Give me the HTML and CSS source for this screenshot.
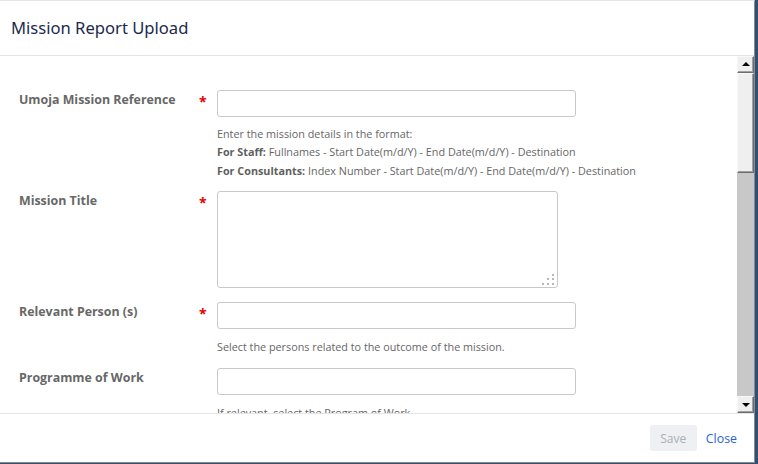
FILE: index.html
```html
<!DOCTYPE html>
<html>
<head>
<meta charset="utf-8">
<title>Mission Report Upload</title>
<link rel="stylesheet" href="styles.css">
</head>
<body>
<div class="modal">
  <div class="modal-header">
    <h4 class="modal-title">Mission Report Upload</h4>
  </div>
  <div class="modal-body">
    <div class="content">
      <form class="form">
        <div class="group group-first">
          <label class="label">Umoja Mission Reference</label>
          <span class="req">*</span>
          <div class="field">
            <input class="input" type="text">
            <div class="help">
              <div>Enter the mission details in the format:</div>
              <div><b>For Staff:</b> Fullnames - Start Date(m/d/Y) - End Date(m/d/Y) - Destination</div>
              <div><b>For Consultants:</b> Index Number - Start Date(m/d/Y) - End Date(m/d/Y) - Destination</div>
            </div>
          </div>
        </div>
        <div class="group group-area">
          <label class="label">Mission Title</label>
          <span class="req">*</span>
          <div class="field">
            <div class="textarea">
              <svg class="grip" width="14" height="13" viewBox="0 0 14 13">
                <rect x="10" y="1" width="2" height="2" fill="#b8b8b8"/>
                <rect x="5" y="5" width="2" height="2" fill="#b8b8b8"/>
                <rect x="10" y="5" width="2" height="2" fill="#b8b8b8"/>
                <rect x="0" y="10" width="2" height="2" fill="#b8b8b8"/>
                <rect x="5" y="10" width="2" height="2" fill="#b8b8b8"/>
                <rect x="10" y="10" width="2" height="2" fill="#b8b8b8"/>
              </svg>
            </div>
          </div>
        </div>
        <div class="group">
          <label class="label">Relevant Person (s)</label>
          <span class="req">*</span>
          <div class="field">
            <input class="input" type="text">
            <div class="help help-one">Select the persons related to the outcome of the mission.</div>
          </div>
        </div>
        <div class="group">
          <label class="label">Programme of Work</label>
          <span class="req"></span>
          <div class="field">
            <input class="input" type="text">
            <div class="help help-one">If relevant, select the Program of Work.</div>
          </div>
        </div>
      </form>
    </div>
    <div class="scrollbar">
      <div class="sb-btn"><span class="arrow-up"></span></div>
      <div class="sb-thumb"></div>
      <div class="sb-track"></div>
      <div class="sb-btn"><span class="arrow-down"></span></div>
    </div>
  </div>
  <div class="modal-footer">
    <button class="btn-save" type="button">Save</button>
    <a class="btn-close">Close</a>
  </div>
</div>
</body>
</html>
```

FILE: styles.css
```css
html, body {
  margin: 0;
  padding: 0;
}
body {
  width: 758px;
  height: 464px;
  background: #2d4f78;
  font-family: "Open Sans", "Noto Sans", "DejaVu Sans", sans-serif;
  overflow: hidden;
}
.modal {
  width: 754px;
  height: 461px;
  background: #fff;
  border-top: 1px solid #e6e6e6;
  border-right: 1px solid #8a8a8a;
  border-bottom: 1px solid #8a8a8a;
  display: flex;
  flex-direction: column;
}
.modal-header {
  height: 55px;
  border-bottom: 1px solid #e5e5e5;
  display: flex;
  align-items: center;
  padding-left: 11px;
  box-sizing: border-box;
  flex: none;
}
.modal-title {
  margin: 0;
  font-family: "Noto Sans", "Open Sans", sans-serif;
  font-weight: 400;
  font-size: 16.6px;
  color: #1b2a4c;
  padding-bottom: 1px;
}
.modal-body {
  height: 357px;
  flex: none;
  display: flex;
  border-bottom: 1px solid #e5e5e5;
}
.content {
  flex: 1;
  overflow: hidden;
  padding-top: 34px;
  box-sizing: border-box;
}
.form {
  margin: 0;
  padding-left: 19px;
}
.group {
  display: grid;
  grid-template-columns: 180px 18px 1fr;
  margin-bottom: 12px;
}
.group-first {
  margin-bottom: 11px;
}
.group-area {
  margin-bottom: 14px;
}
.label {
  font-size: 12.4px;
  font-weight: 700;
  color: #676767;
  line-height: 16px;
  padding-top: 2px;
}
.req {
  color: #e00000;
  font-weight: 700;
  font-size: 14px;
  line-height: 22px;
  padding-top: 1px;
}
.field {
  display: flex;
  flex-direction: column;
}
.input {
  width: 359px;
  height: 27px;
  box-sizing: border-box;
  border: 1px solid #c9c9c9;
  border-radius: 3px;
  margin: 0;
  padding: 0 6px;
  background: #fff;
}
.textarea {
  width: 341px;
  height: 97px;
  box-sizing: border-box;
  border: 1px solid #c9c9c9;
  border-radius: 3px;
  position: relative;
}
.grip {
  position: absolute;
  right: 1px;
  bottom: 1px;
}
.help {
  margin-top: 8px;
  font-size: 10.8px;
  line-height: 18.3px;
  color: #666;
}
.help b {
  font-weight: 700;
  color: #5f5f5f;
}
.help-one {
  margin-top: 9px;
}
.scrollbar {
  width: 17px;
  flex: none;
  display: flex;
  flex-direction: column;
  background: #c8c8c8;
}
.sb-btn, .sb-thumb {
  box-sizing: border-box;
  background: #efefef;
  border-top: 1px solid #f8f8f8;
  border-left: 1px solid #f8f8f8;
  border-right: 1px solid #6d6d6d;
  border-bottom: 1px solid #6d6d6d;
  box-shadow: inset -1px -1px 0 #a0a0a0;
}
.sb-btn {
  height: 17px;
  display: flex;
  align-items: center;
  justify-content: center;
}
.sb-thumb {
  height: 100px;
}
.sb-track {
  flex: 1;
}
.arrow-up, .arrow-down {
  width: 0;
  height: 0;
  border-left: 4px solid transparent;
  border-right: 4px solid transparent;
}
.arrow-up {
  border-bottom: 4px solid #000;
  margin-top: -1px;
}
.arrow-down {
  border-top: 4px solid #000;
}
.modal-footer {
  flex: 1;
  display: flex;
  align-items: center;
  justify-content: flex-end;
  padding-right: 17px;
  gap: 9px;
}
.btn-save {
  width: 47px;
  height: 26px;
  border: 0;
  border-radius: 3px;
  background: #eef0f3;
  color: #a9afb7;
  font-family: "Open Sans", "Noto Sans", sans-serif;
  font-size: 12px;
  padding: 0;
}
.btn-close {
  color: #2b5fd4;
  font-size: 12.4px;
}
```
